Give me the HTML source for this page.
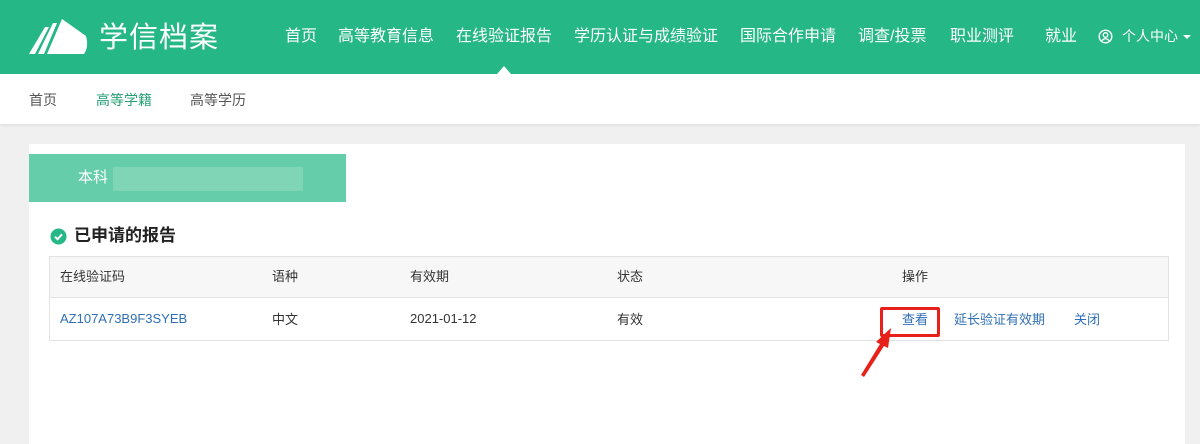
<!DOCTYPE html>
<html><head><meta charset="utf-8"><style>
*{margin:0;padding:0;box-sizing:border-box}
body{width:1200px;height:435px;overflow:hidden;background:#f0f0f0;font-family:"Liberation Sans","Noto Sans CJK SC",sans-serif;position:relative}
.a{position:absolute;white-space:nowrap;line-height:20px}
.hd{position:absolute;left:0;top:0;width:1200px;height:74px;background:#25b785}
.nav{color:#fff;font-size:16px;top:27px}
.sub{position:absolute;left:0;top:74px;width:1200px;height:50px;background:#fff;box-shadow:0 2px 3px rgba(0,0,0,.06)}
.panel{position:absolute;left:29px;top:144px;width:1156px;height:300px;background:#fff}
.th{top:267px;font-size:13px;color:#333}
.td{top:310px;font-size:13px;color:#333}
</style></head><body>
<div class="hd"></div>
<svg class="a" style="left:28px;top:17px" width="62" height="38" viewBox="0 0 62 38"><path d="M1 37 L17 10 L21 10 L7 37Z M10 37 L25 6 L29 6 L16 37Z M19 37 L34 2 L58 19 Q61 30 56 37Z" fill="#fff"/></svg>
<div class="a" style="left:99px;top:23px;font-size:29px;line-height:30px;color:#fff;letter-spacing:1px">学信档案</div>
<div class="a nav" style="left:285px">首页</div>
<div class="a nav" style="left:338px">高等教育信息</div>
<div class="a nav" style="left:456px">在线验证报告</div>
<div class="a nav" style="left:574px">学历认证与成绩验证</div>
<div class="a nav" style="left:740px">国际合作申请</div>
<div class="a nav" style="left:858px">调查/投票</div>
<div class="a nav" style="left:950px">职业测评</div>
<div class="a nav" style="left:1045px">就业</div>
<svg class="a" style="left:1098px;top:29px" width="15" height="15" viewBox="0 0 15 15"><circle cx="7.5" cy="7.5" r="6.3" fill="none" stroke="#fff" stroke-width="1.4"/><circle cx="7.5" cy="6" r="2.3" fill="none" stroke="#fff" stroke-width="1.3"/><path d="M3.5 12 Q7.5 7.5 11.5 12" fill="none" stroke="#fff" stroke-width="1.3"/></svg>
<div class="a" style="left:1122px;top:26px;font-size:14px;color:#fff">个人中心</div>
<div class="a" style="left:1183px;top:35px;border:4px solid transparent;border-top:4px solid #fff;line-height:0"></div>
<div class="sub"></div>
<div class="a" style="left:497px;top:66px;border:7px solid transparent;border-bottom:8px solid #fff;border-top:0;line-height:0"></div>
<div class="a" style="left:29px;top:90px;font-size:14px;color:#555">首页</div>
<div class="a" style="left:96px;top:90px;font-size:14px;color:#25a075">高等学籍</div>
<div class="a" style="left:190px;top:90px;font-size:14px;color:#555">高等学历</div>
<div class="panel"></div>
<div class="a" style="left:29px;top:154px;width:317px;height:48px;background:#66cdaa"></div>
<div class="a" style="left:113px;top:167px;width:190px;height:24px;background:#8cd9bc;opacity:.7"></div>
<div class="a" style="left:78px;top:168px;font-size:15px;color:#fff">本科</div>
<svg class="a" style="left:50px;top:228px" width="17" height="17"><circle cx="8.5" cy="8.5" r="8" fill="#25b785"/><path d="M5 8.7 L7.6 11.2 L12 6.3" stroke="#fff" stroke-width="2" fill="none"/></svg>
<div class="a" style="left:74px;top:226px;font-size:17px;color:#222;font-weight:bold">已申请的报告</div>
<div class="a" style="left:49px;top:256px;width:1120px;height:85px;border:1px solid #e3e3e3"></div>
<div class="a" style="left:50px;top:257px;width:1118px;height:41px;background:#f7f7f7;border-bottom:1px solid #e3e3e3"></div>
<div class="a th" style="left:60px">在线验证码</div>
<div class="a th" style="left:272px">语种</div>
<div class="a th" style="left:410px">有效期</div>
<div class="a th" style="left:617px">状态</div>
<div class="a th" style="left:902px">操作</div>
<div class="a td" style="left:60px;top:309px;color:#2f6fb5">AZ107A73B9F3SYEB</div>
<div class="a td" style="left:272px">中文</div>
<div class="a td" style="left:410px;top:309px">2021-01-12</div>
<div class="a td" style="left:617px">有效</div>
<div class="a td" style="left:902px;color:#2f6fb5">查看</div>
<div class="a td" style="left:954px;color:#2f6fb5">延长验证有效期</div>
<div class="a td" style="left:1074px;color:#2f6fb5">关闭</div>
<div class="a" style="left:880px;top:307px;width:60px;height:30px;border:3px solid #e8201a;border-radius:2px"></div>
<svg class="a" style="left:858px;top:322px" width="40" height="56"><path d="M3 53 L22 22 L18 20 L33 6 L30 26 L26 24 L6 55Z" fill="#e8201a"/></svg>
</body></html>
